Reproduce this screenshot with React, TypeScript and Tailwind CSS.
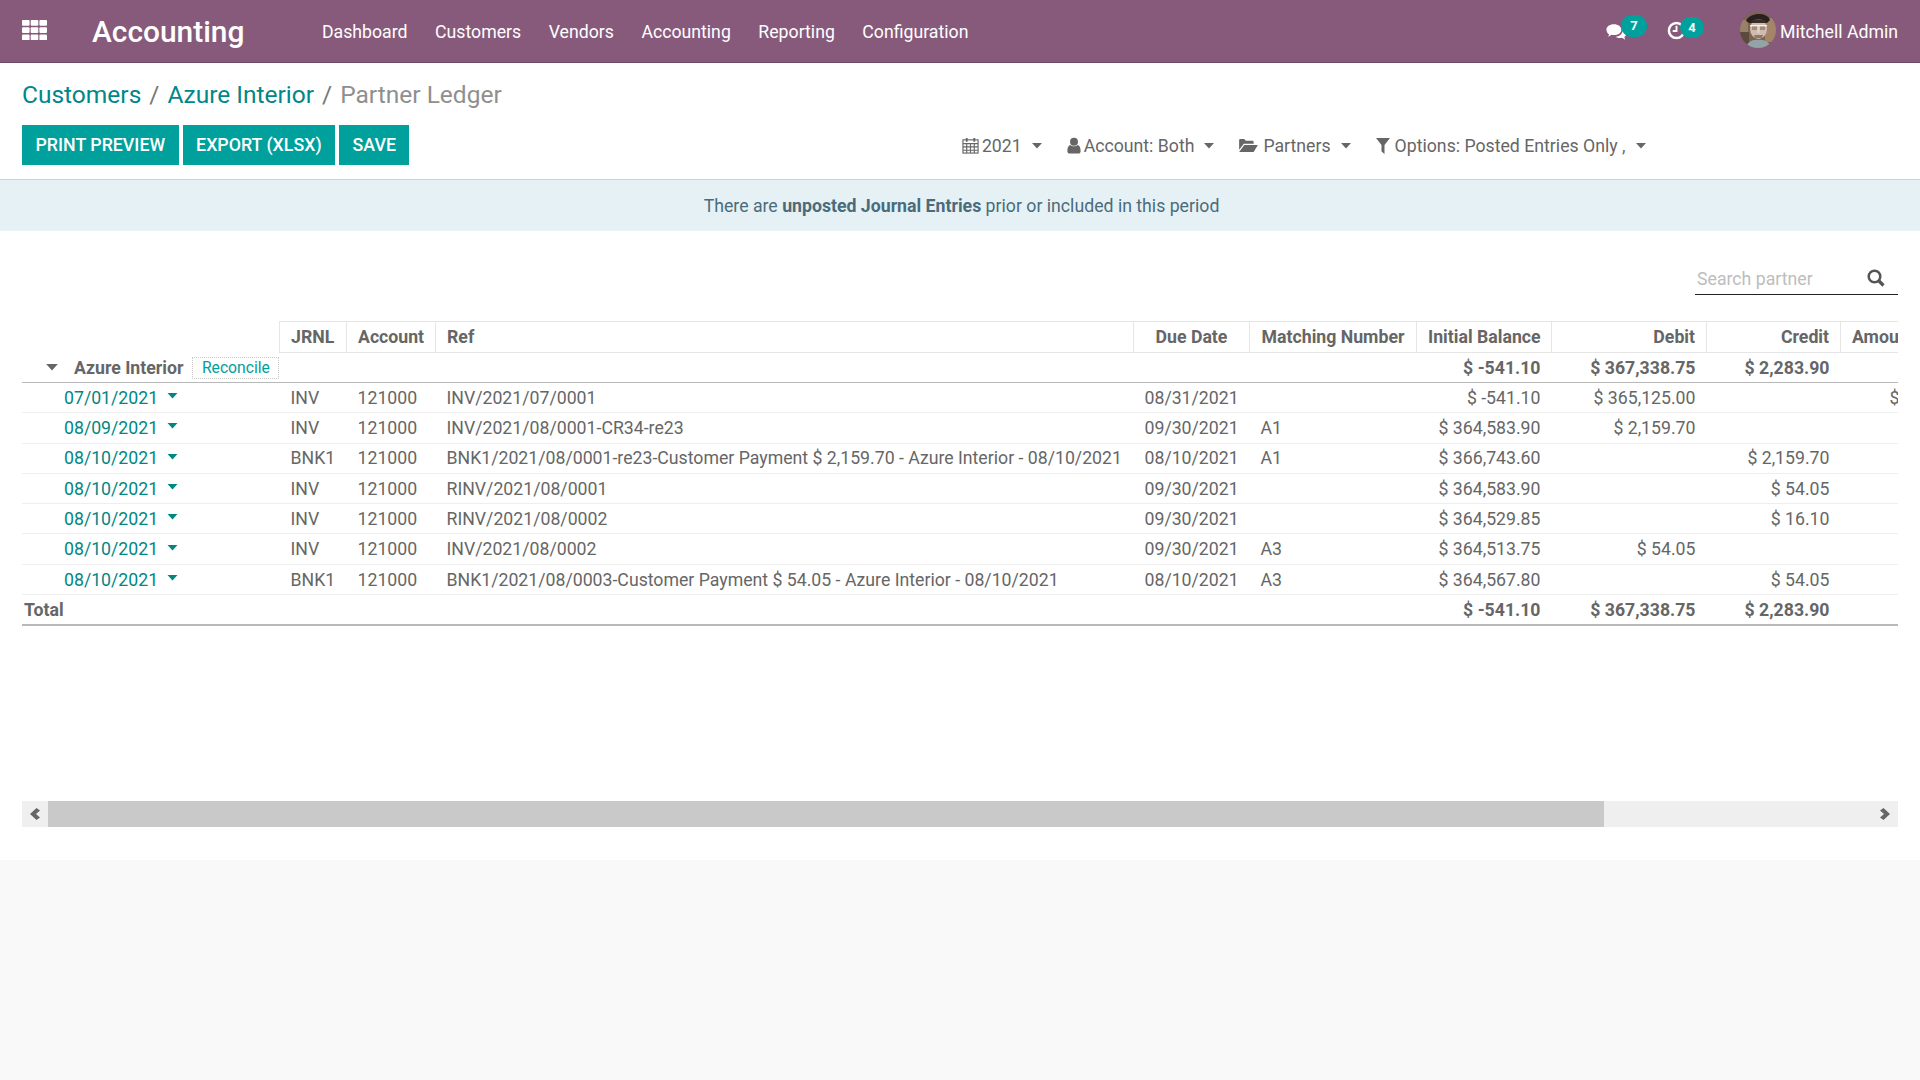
interface Row {
    date: string;
    jrnl: string;
    ref: string;
    due: string;
    match?: string;
    init: string;
    debit?: string;
    credit?: string;
    amount?: string;
}

const rows: Row[] = [
    { date: "07/01/2021", jrnl: "INV", ref: "INV/2021/07/0001", due: "08/31/2021", init: "$ -541.10", debit: "$ 365,125.00", amount: "$ 365,125.00" },
    { date: "08/09/2021", jrnl: "INV", ref: "INV/2021/08/0001-CR34-re23", due: "09/30/2021", match: "A1", init: "$ 364,583.90", debit: "$ 2,159.70" },
    { date: "08/10/2021", jrnl: "BNK1", ref: "BNK1/2021/08/0001-re23-Customer Payment $ 2,159.70 - Azure Interior - 08/10/2021", due: "08/10/2021", match: "A1", init: "$ 366,743.60", credit: "$ 2,159.70" },
    { date: "08/10/2021", jrnl: "INV", ref: "RINV/2021/08/0001", due: "09/30/2021", init: "$ 364,583.90", credit: "$ 54.05" },
    { date: "08/10/2021", jrnl: "INV", ref: "RINV/2021/08/0002", due: "09/30/2021", init: "$ 364,529.85", credit: "$ 16.10" },
    { date: "08/10/2021", jrnl: "INV", ref: "INV/2021/08/0002", due: "09/30/2021", match: "A3", init: "$ 364,513.75", debit: "$ 54.05" },
    { date: "08/10/2021", jrnl: "BNK1", ref: "BNK1/2021/08/0003-Customer Payment $ 54.05 - Azure Interior - 08/10/2021", due: "08/10/2021", match: "A3", init: "$ 364,567.80", credit: "$ 54.05" },
];

const menu = ["Dashboard", "Customers", "Vendors", "Accounting", "Reporting", "Configuration"];

function Caret({ className }: { className?: string }) {
    return (
        <svg viewBox="0 0 10 6" className={className} fill="currentColor">
            <path d="M0 0h10L5 5.5z" />
        </svg>
    );
}

function AppsIcon() {
    const cells = [0, 7.2, 14.4];
    return (
        <svg viewBox="0 0 25 20" className="h-[20px] w-[25px]" fill="#fff">
            {cells.map((y) =>
                [0, 8.7, 17.4].map((x) => <rect key={`${x}-${y}`} x={x} y={y} width="7.6" height="5.8" rx="1" />)
            )}
        </svg>
    );
}

function Avatar() {
    return (
        <svg viewBox="0 0 36 36" className="h-[36px] w-[36px] rounded-full">
            <rect width="36" height="36" fill="#7d6450" />
            <rect x="25" y="6" width="11" height="24" fill="#a5856a" />
            <rect y="8" width="8" height="12" fill="#9a7f69" />
            <rect y="20" width="9" height="16" fill="#5d4a3e" />
            <path d="M6 9C10 0 27 0 30 8l-3 3H9z" fill="#2a211e" />
            <ellipse cx="18.500" cy="17" rx="8.500" ry="10" fill="#d0bcae" />
            <path d="M11 9c3-2.500 11-2.500 15 0l-1 2H12z" fill="#3a2e2a" />
            <rect x="10" y="13" width="17" height="1.500" fill="#f5f2ee" />
            <rect x="12" y="14.500" width="5" height="3.500" fill="#a08c7d" />
            <rect x="20" y="14.500" width="5" height="3.500" fill="#a08c7d" />
            <rect x="17.500" y="15" width="2" height="6" fill="#e2d4c9" />
            <path d="M14 23h9l-1 3h-7z" fill="#94766a" />
            <path d="M6 36c1-6 7-9 12-8 6-1 12 2 13 8z" fill="#93a4a8" />
        </svg>
    );
}

function Badge({ n, className }: { n: number; className?: string }) {
    return (
        <span
            className={`absolute flex items-center justify-center rounded-full bg-[#00A09D] text-[13px] font-bold text-white ${className ?? ""}`}
        >
            {n}
        </span>
    );
}

function Navbar() {
    return (
        <div className="flex h-[63px] items-center border-b border-[#6f4a66] bg-[#875A7B] pt-[2px] text-[17.7px] text-white">
            <div className="mb-[4px] ml-[22px] w-[70px]">
                <AppsIcon />
            </div>
            <span className="w-[230px] text-[29.900px] font-medium">Accounting</span>
            <nav className="flex gap-[27.500px]">
                {menu.map((m) => (
                    <span key={m}>{m}</span>
                ))}
            </nav>
            <div className="ml-auto mr-[22px] flex items-center">
                <span className="relative mr-[37px] h-[24px] w-[24px]">
                    <svg viewBox="0 0 24 20" className="mt-[3px] h-[18px] w-[21px]" fill="#fff">
                        <path d="M9 1c5 0 8.500 2.700 8.500 6.300S14 13.500 9 13.500c-1 0-1.800-.1-2.600-.3L2.500 15.500l1-3C1.500 11.300.5 9.400.5 7.300.5 3.700 4 1 9 1z" />
                        <path d="M19.200 6.500c2.600.8 4.300 2.700 4.300 5 0 1.800-1 3.300-2.600 4.300l1 3-3.600-2.200c-.8.200-1.500.3-2.300.3-2 0-3.800-.6-5-1.500 5.500-.3 8.500-4.300 8.200-8.900z" />
                    </svg>
                    <Badge n={7} className="left-[15px] top-[-5px] h-[22px] w-[26px]" />
                </span>
                <span className="relative mr-[52px] h-[24px] w-[20px]">
                    <svg viewBox="0 0 20 20" className="mt-[1px] h-[19px] w-[19px]" fill="none" stroke="#fff" strokeWidth="2.600">
                        <circle cx="10" cy="10" r="8" />
                        <path d="M10 5v5.500H6" strokeWidth="2" />
                    </svg>
                    <Badge n={4} className="left-[13px] top-[-3px] h-[21px] w-[24px]" />
                </span>
                <span className="mb-[5px] ml-[1px]">
                    <Avatar />
                </span>
                <span className="ml-[4px]">Mitchell Admin</span>
            </div>
        </div>
    );
}

function FilterItem({ icon, label }: { icon: React.ReactNode; label: string }) {
    return (
        <span className="flex items-center whitespace-nowrap">
            {icon}
            <span>{label}</span>
            <Caret className="ml-[10px] h-[6px] w-[10px] text-[#666]" />
        </span>
    );
}

function ControlPanel() {
    return (
        <div className="border-b border-[#cdd0d4] px-[22px]">
            <div className="flex h-[61px] items-center pt-[3px] text-[24.500px] text-[#8f8f8f]">
                <span className="text-[#00878a]">Customers</span>
                <span className="mx-[8px] text-[#777]">/</span>
                <span className="text-[#00878a]">Azure Interior</span>
                <span className="mx-[8px] text-[#777]">/</span>
                <span>Partner Ledger</span>
            </div>
            <div className="flex h-[55px] items-start pt-[1px]">
                <div className="flex gap-[4px] text-[17.800px] font-medium text-white">
                    <button className="h-[40px] bg-[#00A09D] px-[13.500px] uppercase">Print Preview</button>
                    <button className="h-[40px] bg-[#00A09D] px-[13.500px] uppercase">Export (XLSX)</button>
                    <button className="h-[40px] bg-[#00A09D] px-[13.500px] uppercase">Save</button>
                </div>
                <div className="ml-auto mr-[252.500px] flex h-[42px] items-center gap-[25px] text-[17.7px] text-[#666]">
                    <FilterItem
                        label="2021"
                        icon={
                            <svg viewBox="0 0 18 18" className="mr-[3px] h-[17px] w-[17px]" fill="none" stroke="#666" strokeWidth="1.200">
                                <rect x="1" y="3" width="16" height="14" />
                                <path d="M1 7h16M1 10.500h16M1 14h16M5 7v10M9 7v10M13 7v10" />
                                <path d="M5 1v4M13 1v4" strokeWidth="2" />
                            </svg>
                        }
                    />
                    <FilterItem
                        label="Account: Both"
                        icon={
                            <svg viewBox="0 0 14 18" className="mr-[3px] h-[17px] w-[14px]" fill="#666">
                                <circle cx="7" cy="5" r="4.200" />
                                <path d="M3 8.500c2 1.800 6 1.800 8 0 2 .5 3 3 3 6.500 0 1.500-1 2.500-2.500 2.500h-9C1 17.500 0 16.500 0 15c0-3.500 1-6 3-6.500z" />
                            </svg>
                        }
                    />
                    <FilterItem
                        label="Partners"
                        icon={
                            <svg viewBox="0 0 20 16" className="mr-[5px] h-[15px] w-[19px]" fill="#666">
                                <path d="M0 2.500C0 1.500.7 1 1.500 1h4l1.500 2h7c1 0 1.500.6 1.500 1.500V6H5L0 12.500z" />
                                <path d="M5.500 7.500H20l-4.500 7.500H0z" />
                            </svg>
                        }
                    />
                    <FilterItem
                        label="Options: Posted Entries Only ,"
                        icon={
                            <svg viewBox="0 0 14 16" className="mr-[5px] h-[16px] w-[14px]" fill="#666">
                                <path d="M0 0h14L8.500 7v9l-3-2.500V7z" />
                            </svg>
                        }
                    />
                </div>
            </div>
        </div>
    );
}

function LedgerTable() {
    const th = "border border-[#e6e6e6] px-[11px] h-[31px] font-bold";
    const td = "px-[11px] pt-[1px] whitespace-nowrap";
    return (
        <table className="w-[2100px] table-fixed border-collapse text-[17.7px] text-[#666]">
            <colgroup>
                <col className="w-[257.500px]" />
                <col className="w-[67px]" />
                <col className="w-[89px]" />
                <col className="w-[698px]" />
                <col className="w-[116px]" />
                <col className="w-[167px]" />
                <col className="w-[135px]" />
                <col className="w-[155px]" />
                <col className="w-[134px]" />
                <col />
            </colgroup>
            <thead>
                <tr>
                    <th className="h-[31px]"></th>
                    <th className={`${th} text-left`}>JRNL</th>
                    <th className={`${th} text-left`}>Account</th>
                    <th className={`${th} text-left`}>Ref</th>
                    <th className={`${th} text-center`}>Due Date</th>
                    <th className={`${th} whitespace-nowrap text-center`}>Matching Number</th>
                    <th className={`${th} whitespace-nowrap text-right`}>Initial Balance</th>
                    <th className={`${th} text-right`}>Debit</th>
                    <th className={`${th} text-right`}>Credit</th>
                    <th className={`${th} whitespace-nowrap text-left`}>Amount Currency</th>
                </tr>
            </thead>
            <tbody>
                <tr className="h-[29px] border-b border-[#b8b8b8] font-bold">
                    <td colSpan={6} className="whitespace-nowrap">
                        <div className="flex h-[29px] items-center">
                            <Caret className="ml-[24px] h-[7px] w-[12px] text-[#666]" />
                            <span className="ml-[16px] pt-[1px] font-bold">Azure Interior</span>
                            <span className="ml-[9px] flex h-[22px] w-[87px] items-center justify-center border border-dotted border-[#c8c8c8] pt-[1px] text-[15.700px] font-normal text-[#00A09D]">
                                Reconcile
                            </span>
                        </div>
                    </td>
                    <td className={`${td} text-right`}>$ -541.10</td>
                    <td className={`${td} text-right`}>$ 367,338.75</td>
                    <td className={`${td} text-right`}>$ 2,283.90</td>
                    <td></td>
                </tr>
                {rows.map((r, i) => (
                    <tr key={i} className="h-[30.300px] border-b border-[#eeeeee]">
                        <td className="pl-[42px] pt-[1px]">
                            <div className="flex items-center text-[#008784]">
                                <span>{r.date}</span>
                                <Caret className="ml-[9px] h-[6px] w-[11px] -translate-y-[2px]" />
                            </div>
                        </td>
                        <td className={td}>{r.jrnl}</td>
                        <td className={td}>121000</td>
                        <td className={td}>{r.ref}</td>
                        <td className={td}>{r.due}</td>
                        <td className={td}>{r.match}</td>
                        <td className={`${td} text-right`}>{r.init}</td>
                        <td className={`${td} text-right`}>{r.debit}</td>
                        <td className={`${td} text-right`}>{r.credit}</td>
                        <td className="whitespace-nowrap pl-[49px] pt-[1px]">{r.amount}</td>
                    </tr>
                ))}
                <tr className="h-[30px] border-b-2 border-[#b8b8b8] font-bold">
                    <td colSpan={6} className="pl-[2px] pt-[1px]">Total</td>
                    <td className={`${td} text-right`}>$ -541.10</td>
                    <td className={`${td} text-right`}>$ 367,338.75</td>
                    <td className={`${td} text-right`}>$ 2,283.90</td>
                    <td></td>
                </tr>
            </tbody>
        </table>
    );
}

function Scrollbar() {
    return (
        <div className="mt-[175px] flex h-[26px] items-stretch bg-[#efefef] text-[#666]">
            <span className="flex w-[26px] items-center justify-center">
                <svg viewBox="0 0 10 12" className="h-[12px] w-[10px]" fill="currentColor">
                    <path d="M6.500 0L10 2.500 6 6l4 3.500L6.500 12 0 6z" />
                </svg>
            </span>
            <div className="w-[1556px] bg-[#c9c9c9]"></div>
            <span className="ml-auto flex w-[26px] items-center justify-center">
                <svg viewBox="0 0 10 12" className="h-[12px] w-[10px]" fill="currentColor">
                    <path d="M3.500 0L0 2.500 4 6 0 9.500 3.500 12 10 6z" />
                </svg>
            </span>
        </div>
    );
}

export default function App() {
    return (
        <div className="flex min-h-screen flex-col bg-[#F9F9F9] font-['Roboto',sans-serif]">
            <Navbar />
            <div className="bg-white">
                <ControlPanel />
                <div className="flex h-[51px] items-center justify-center bg-[#E6F1F5] pl-[3px] pt-[1px] text-[17.7px] text-[#4a6c7a]">
                    <span>
                        There are <b className="font-bold">unposted Journal Entries</b> prior or included in this period
                    </span>
                </div>
                <div className="px-[22px] pb-[33px]">
                    <div className="flex h-[90px] justify-end pt-[33px]">
                        <div className="flex h-[31px] w-[203px] items-center justify-between border-b border-[#222] pl-[2px] pr-[13px] text-[17.7px] text-[#bdbdbd]">
                            <span>Search partner</span>
                            <svg viewBox="0 0 18 18" className="mb-[2px] h-[18px] w-[18px]" fill="none" stroke="#555">
                                <circle cx="7.500" cy="7.500" r="5.800" strokeWidth="2.500" />
                                <path d="M11.500 11.500L16.500 16.500" strokeWidth="3.200" />
                            </svg>
                        </div>
                    </div>
                    <div className="overflow-hidden">
                        <LedgerTable />
                    </div>
                    <Scrollbar />
                </div>
            </div>
        </div>
    );
}
